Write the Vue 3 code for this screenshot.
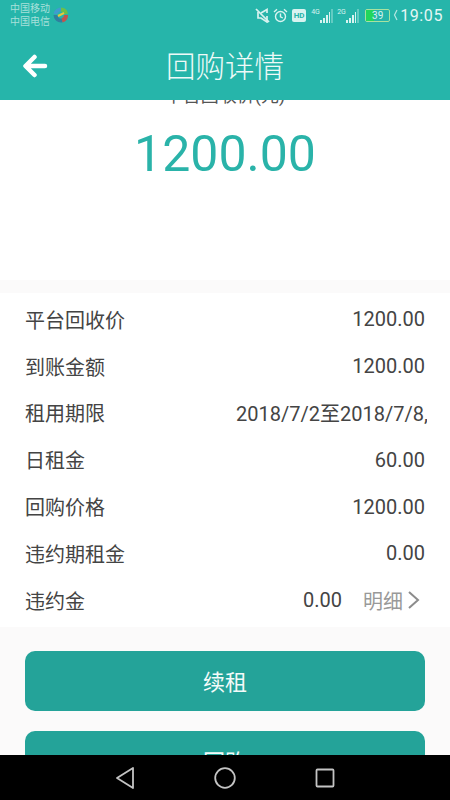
<script setup>
const rows = [
  { label: '平台回收价', value: '1200.00' },
  { label: '到账金额', value: '1200.00' },
  { label: '租用期限', value: '2018/7/2至2018/7/8,', clip: true },
  { label: '日租金', value: '60.00' },
  { label: '回购价格', value: '1200.00' },
  { label: '违约期租金', value: '0.00' },
  { label: '违约金', value: '0.00', detail: true }
]
</script>

<template>
  <div class="phone">
    <header class="top">
      <div class="status">
        <div class="carrier">
          <div class="carrier-names">
            <span>中国移动</span>
            <span>中国电信</span>
          </div>
          <svg class="app-logo" width="15" height="16" viewBox="0 0 15 16" fill="none" stroke-width="4">
            <path d="M2.500 7 A5.500 5.500 0 0 1 8 2.500" stroke="#3f9ccf"/>
            <path d="M8 2.500 A5.500 5.500 0 0 1 13 7" stroke="#6cbf4a"/>
            <path d="M13 8 A5.500 5.500 0 0 1 9 13.500" stroke="#c2544e"/>
            <path d="M9 13.500 A5.500 5.500 0 0 1 2.500 8" stroke="#2f7f9f"/>
            <path d="M5 9 L11 6" stroke="#e8c83a" stroke-width="2"/>
          </svg>
        </div>
        <div class="indicators">
          <svg width="15" height="15" viewBox="0 0 15 15" fill="none" stroke="#d8f3f0" stroke-width="1.700">
            <path d="M3 4 L3 10 L6 10 L12 14 L12 8"/>
            <path d="M6 5 L12 1.500 L12 5"/>
            <path d="M1 1 L14 14"/>
          </svg>
          <svg width="15" height="15" viewBox="0 0 15 15" fill="none" stroke="#d8f3f0" stroke-width="1.400">
            <circle cx="7.500" cy="8.500" r="5"/>
            <path d="M7.500 5.500 L7.500 8.800 L9.800 10"/>
            <path d="M1 4 L4 1.300 M14 4 L11 1.300"/>
          </svg>
          <span class="hd">HD</span>
          <div class="signal">
            <span class="net">4G</span>
            <span class="bars"><i class="b1"></i><i class="b2"></i><i class="b3"></i><i class="b4"></i><i class="b5 off"></i></span>
          </div>
          <div class="signal">
            <span class="net">2G</span>
            <span class="bars"><i class="b1"></i><i class="b2"></i><i class="b3"></i><i class="b4"></i><i class="b5 off"></i></span>
          </div>
          <div class="battery">
            <i class="charge"></i>
            <span class="level">39</span>
          </div>
          <svg class="bolt" width="5" height="12" viewBox="0 0 5 12" fill="none" stroke="#b5e6e1" stroke-width="1.200">
            <path d="M4 1 L1.500 6 L4 11"/>
          </svg>
          <span class="clock">19:05</span>
        </div>
      </div>
      <div class="titlebar">
        <svg class="back" width="26" height="24" viewBox="0 0 26 24" fill="none" stroke="#fff" stroke-width="4.500" stroke-linecap="round" stroke-linejoin="round">
          <path d="M23 12 L4 12 M12.500 3 L3.500 12 L12.500 21"/>
        </svg>
        <h1>回购详情</h1>
      </div>
    </header>

    <main class="scroller">
      <section class="hero">
        <p class="hero-label">平台回收价(元)</p>
        <p class="hero-value">1200.00</p>
      </section>
      <section class="list">
        <div v-for="row in rows" :key="row.label" class="row">
          <span class="label">{{ row.label }}</span>
          <span v-if="row.clip" class="value clip">{{ row.value }}</span>
          <span v-else-if="!row.detail" class="value">{{ row.value }}</span>
          <span v-else class="detail">
            <span class="value">{{ row.value }}</span>
            <span class="detail-link">明细</span>
            <svg width="12" height="18" viewBox="0 0 12 18" fill="none" stroke="#8c8c8c" stroke-width="2">
              <path d="M1 1 L10 9 L1 17"/>
            </svg>
          </span>
        </div>
      </section>
      <section class="actions">
        <button class="btn">续租</button>
        <button class="btn">回购</button>
      </section>
    </main>

    <nav class="navbar">
      <svg width="20" height="24" viewBox="0 0 20 24" fill="none" stroke="#c4c4c4" stroke-width="1.800" stroke-linejoin="round">
        <path d="M18 2 L2 12 L18 22 Z"/>
      </svg>
      <svg width="22" height="22" viewBox="0 0 22 22" fill="none" stroke="#c4c4c4" stroke-width="1.800">
        <circle cx="11" cy="11" r="9.800"/>
      </svg>
      <svg width="20" height="20" viewBox="0 0 20 20" fill="none" stroke="#c4c4c4" stroke-width="1.800">
        <rect x="1.500" y="1.500" width="17" height="17" rx="1"/>
      </svg>
    </nav>
  </div>
</template>

<style scoped>
.phone {
  width: 450px;
  height: 800px;
  display: flex;
  flex-direction: column;
  overflow: hidden;
  background: #fbfafa;
  font-family: Roboto, "Noto Sans CJK SC", sans-serif;
  color: #444;
}
.top {
  height: 100px;
  flex: none;
  background: #26b5aa;
  position: relative;
  z-index: 1;
}
.status {
  height: 30px;
  display: flex;
  justify-content: space-between;
  align-items: center;
  padding: 0 7px 0 10px;
}
.carrier {
  display: flex;
  align-items: center;
  gap: 3px;
}
.carrier-names {
  display: flex;
  flex-direction: column;
  font-size: 10px;
  line-height: 13px;
  color: #a8e0da;
}
.indicators {
  display: flex;
  align-items: center;
  color: #d8f3f0;
}
.indicators > svg:first-child {
  margin-right: 3px;
}
.hd {
  width: 14px;
  height: 13px;
  margin-left: 4px;
  border-radius: 2px;
  background: #d8f3f0;
  color: #26b5aa;
  font-size: 8px;
  font-weight: 700;
  line-height: 13px;
  text-align: center;
}
.signal {
  display: flex;
  align-items: flex-end;
  height: 15px;
  margin-left: 5px;
}
.net {
  font-size: 7px;
  line-height: 8px;
  align-self: flex-start;
  width: 9px;
}
.bars {
  display: flex;
  align-items: flex-end;
  gap: 1px;
  width: 13px;
}
.bars i {
  width: 2px;
  background: #d8f3f0;
}
.bars .b1 { height: 3px; }
.bars .b2 { height: 5px; }
.bars .b3 { height: 8px; }
.bars .b4 { height: 11px; }
.bars .b5 { height: 14px; }
.bars .off { opacity: 0.35; }
.signal + .signal {
  margin-left: 4px;
}
.battery {
  position: relative;
  width: 25px;
  height: 13px;
  margin-left: 6px;
  border: 1px solid #a8e2a0;
  border-radius: 2px;
  box-sizing: border-box;
}
.charge {
  position: absolute;
  left: 0;
  top: 0;
  bottom: 0;
  width: 8px;
  background: #22d65c;
}
.level {
  position: absolute;
  inset: 0;
  font-size: 10px;
  line-height: 11px;
  text-align: center;
  color: #d8f3f0;
}
.bolt {
  margin-left: 3px;
}
.clock {
  margin-left: 2px;
  font-size: 16px;
  letter-spacing: 0.6px;
  color: #e4f7f5;
}
.titlebar {
  height: 70px;
  position: relative;
  display: flex;
  align-items: center;
  justify-content: center;
}
.titlebar h1 {
  margin: 0 0 2px;
  font-size: 29.500px;
  font-weight: 300;
  color: #eefaf8;
}
.back {
  position: absolute;
  left: 22px;
  top: 24px;
}
.scroller {
  flex: 1;
  min-height: 0;
  overflow: hidden;
}
.hero {
  margin-top: -16px;
  height: 196px;
  background: #fff;
  text-align: center;
  box-sizing: border-box;
}
.hero-label {
  margin: 0;
  height: 24px;
  font-size: 18px;
  line-height: 24px;
  color: #555;
}
.hero-value {
  margin: 17px 0 0;
  font-size: 50px;
  line-height: 58px;
  color: #2ab3a9;
}
.list {
  margin-top: 13px;
  padding: 3px 25px 3.400px;
  background: #fff;
}
.row {
  height: 46.800px;
  display: flex;
  align-items: center;
  justify-content: space-between;
  font-size: 20px;
}
.label {
  color: #444;
}
.value {
  color: #444;
}
.clip {
  width: 190.500px;
  margin-right: -1.500px;
  overflow: hidden;
  white-space: nowrap;
}
.detail {
  display: flex;
  align-items: center;
}
.detail-link {
  margin-left: 21px;
  color: #999;
}
.detail svg {
  margin-left: 5px;
  margin-right: 5px;
}
.actions {
  padding: 24px 25px;
  display: flex;
  flex-direction: column;
  gap: 20px;
}
.btn {
  height: 60px;
  flex: none;
  border: 0;
  border-radius: 10px;
  background: #24a399;
  color: #f4fbfa;
  font-family: inherit;
  font-size: 22px;
  padding: 0 0 2px;
}
.navbar {
  height: 45px;
  flex: none;
  position: relative;
  z-index: 1;
  background: #000;
  display: flex;
  align-items: center;
  justify-content: center;
  gap: 79px;
}
</style>
